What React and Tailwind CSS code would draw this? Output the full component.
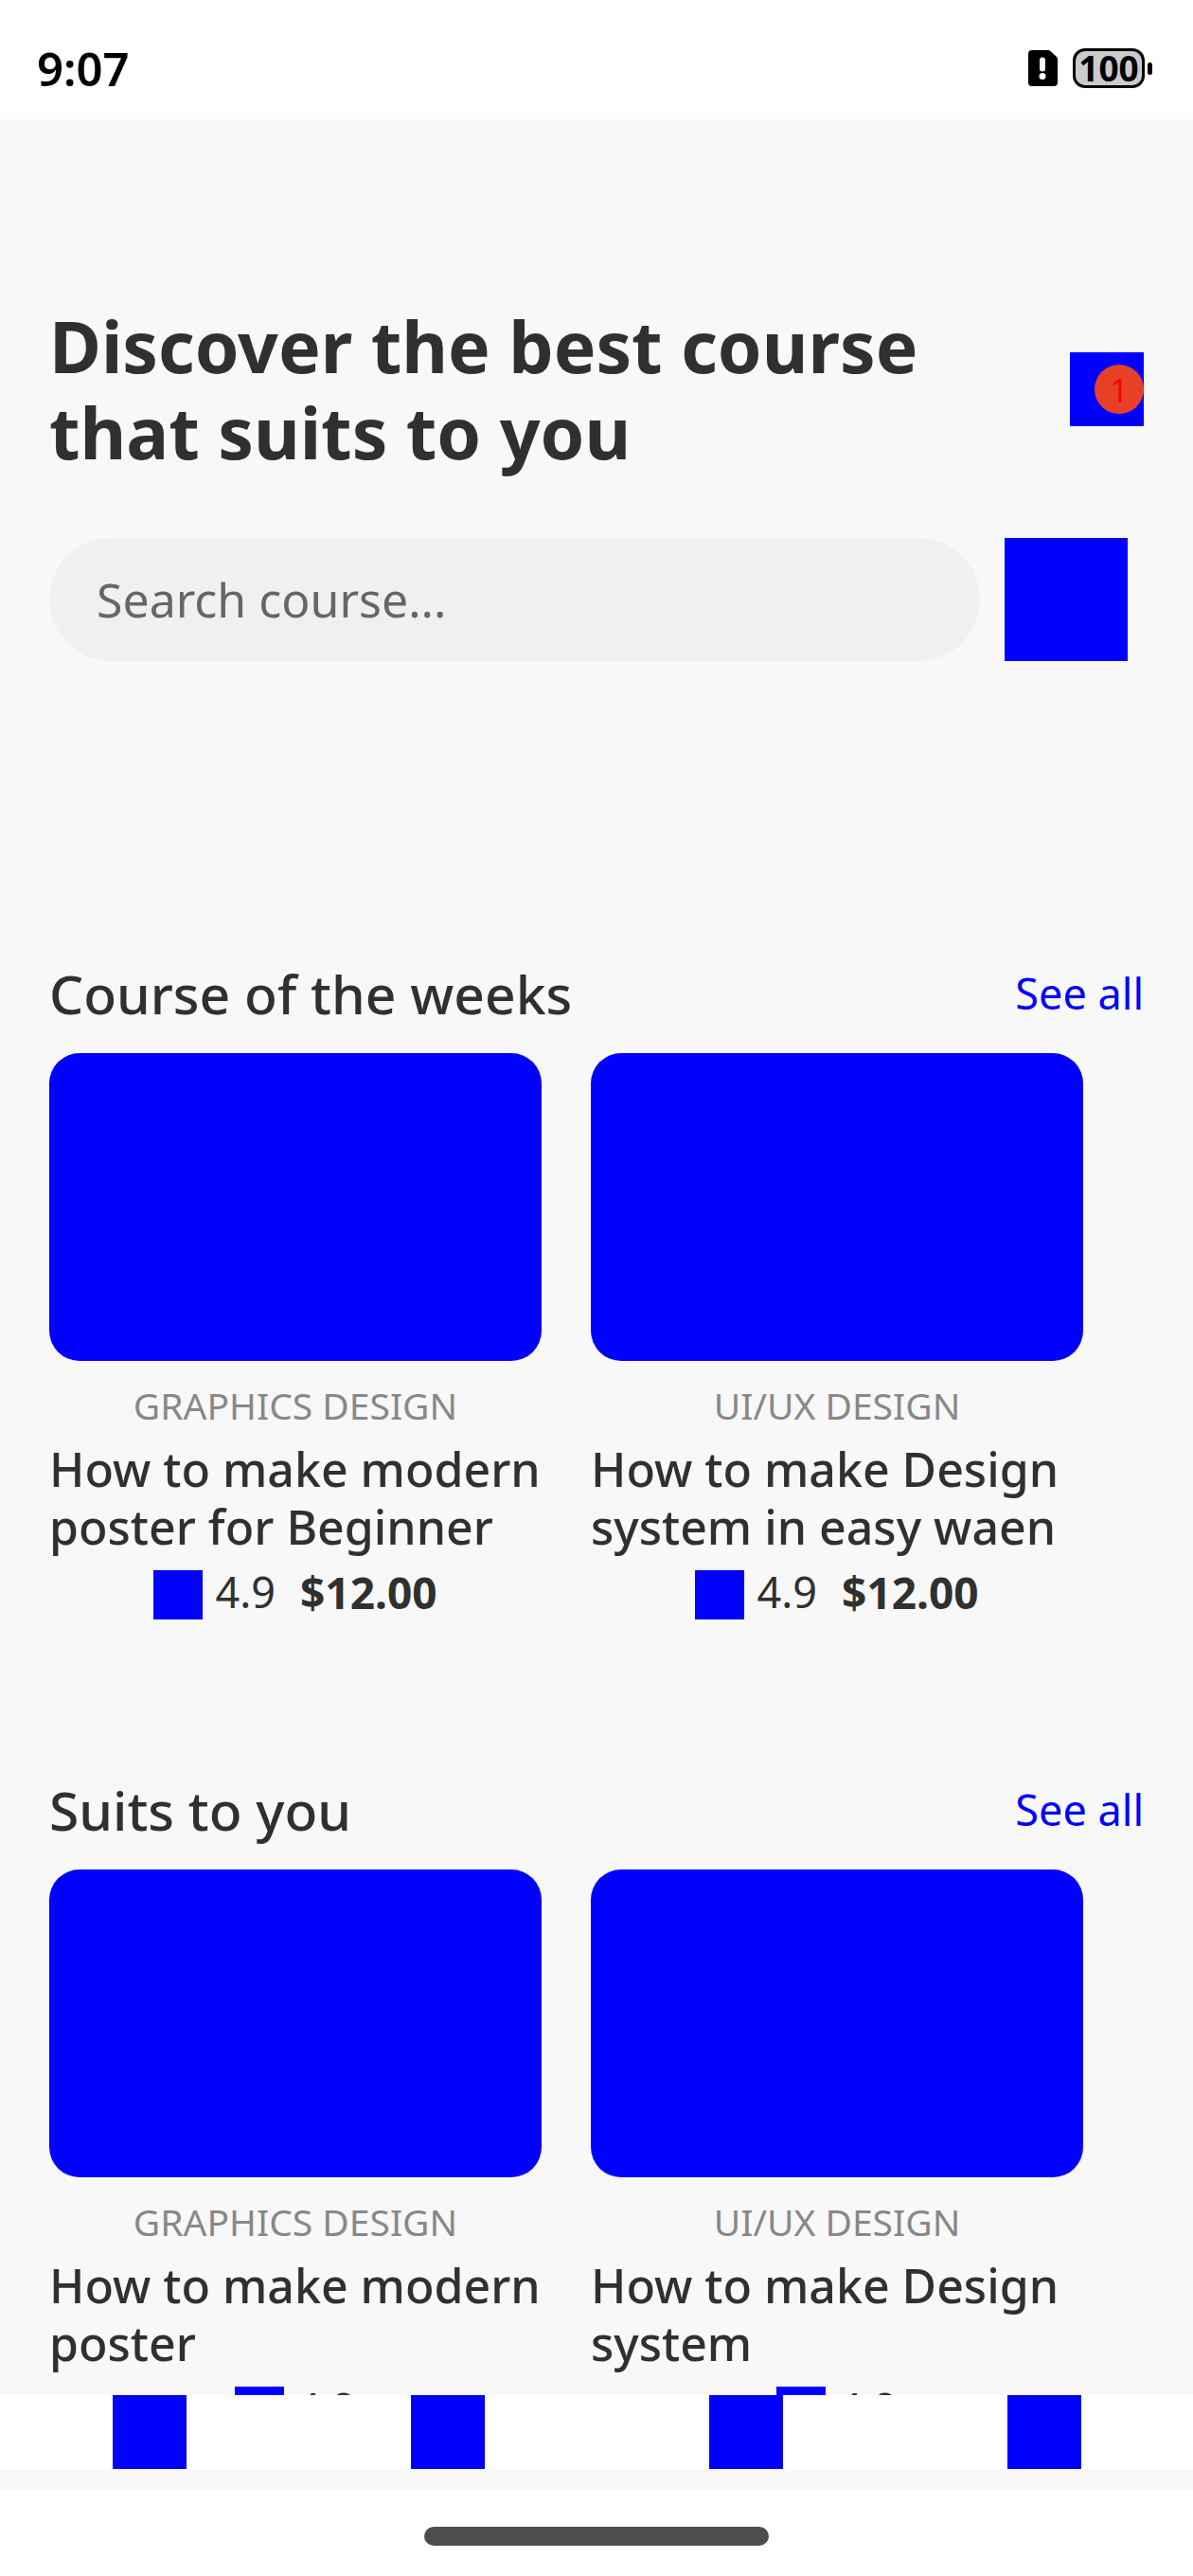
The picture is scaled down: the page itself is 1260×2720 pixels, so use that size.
import React from "react";

const sections = [
  {
    title: "Course of the weeks",
    courses: [
      { category: "GRAPHICS DESIGN", title: ["How to make modern", "poster for Beginner"], rating: "4.9", price: "$12.00" },
      { category: "UI/UX DESIGN", title: ["How to make Design", "system in easy waen"], rating: "4.9", price: "$12.00" },
    ],
  },
  {
    title: "Suits to you",
    courses: [
      { category: "GRAPHICS DESIGN", title: ["How to make modern", "poster"], rating: "4.9" },
      { category: "UI/UX DESIGN", title: ["How to make Design", "system"], rating: "4.9" },
    ],
  },
];

const tabs = ["Home", "Courses", "Saved", "Profile"];

function StatusBar() {
  return (
    <header className="flex h-[126px] shrink-0 items-center justify-between bg-white pt-[18px] pr-[43px] pl-[39px] text-black">
      <time className="text-[49px] leading-[50px] font-semibold">9:07</time>
      <div className="flex items-center gap-4">
        <svg className="h-[38px] w-[31px]" viewBox="0 0 31 38" aria-hidden="true">
          <path d="M4 0H21Q22.500 0 23.500 1L30 7Q31 8 31 9.500V34Q31 38 27 38H4Q0 38 0 34V4Q0 0 4 0Z" fill="#000" />
          <rect x="12" y="7.500" width="6" height="15" rx="3" fill="#fff" />
          <circle cx="15" cy="27.500" r="3.500" fill="#fff" />
        </svg>
        <div className="flex items-center gap-[3px]">
          <div className="flex h-[42px] w-[76px] items-center justify-center rounded-[13px] border-[3px] border-black bg-[#cbcbcb] text-[37px] leading-9 font-bold">
            100
          </div>
          <div className="h-[13px] w-[5px] rounded-full bg-black" />
        </div>
      </div>
    </header>
  );
}

function CourseCard({ course }) {
  return (
    <article className="w-[520px] shrink-0">
      <div className="h-[325px] rounded-[32px] bg-[#0000ff]" />
      <p className="mt-[21px] text-center text-[39px] leading-[52px] text-[#888888]">{course.category}</p>
      <h3 className="mt-[11px] text-[50px] leading-[61px] font-medium whitespace-nowrap">
        {course.title.map((line) => (
          <span key={line} className="block">{line}</span>
        ))}
      </h3>
      <div className="mt-[15px] flex h-[52px] items-start justify-center text-[45px] leading-[46px]">
        <span className="size-[52px] bg-[#0000ff]" />
        <span className="ml-[13px]">{course.rating}</span>
        {course.price && <span className="ml-[26px] text-[46px] font-bold">{course.price}</span>}
      </div>
    </article>
  );
}

function Section({ section }) {
  return (
    <section className="mb-[163px]">
      <div className="flex items-center justify-between pr-[52px]">
        <h2 className="text-[57px] leading-[76px] font-medium">{section.title}</h2>
        <a href="#all" className="text-[45px] leading-[76px] text-[#0000ff]">See all</a>
      </div>
      <div className="mt-[25px] flex gap-[52px]">
        {section.courses.map((course) => (
          <CourseCard key={course.category} course={course} />
        ))}
      </div>
    </section>
  );
}

export default function App() {
  return (
    <div className="flex h-screen flex-col bg-[#f8f8f8] font-['Noto_Sans',sans-serif] text-[#303030]">
      <StatusBar />
      <main className="min-h-0 flex-1 overflow-hidden pt-[194px] pl-[52px]">
        <div className="flex items-center justify-between pr-[52px]">
          <h1 className="text-[75px] leading-[91px] font-bold">
            Discover the best course
            <br />
            that suits to you
          </h1>
          <button aria-label="Notifications" className="relative size-[78px] bg-[#0000ff]">
            <span className="absolute top-[13px] right-0 flex size-[52px] items-center justify-center rounded-full bg-[#e84026] text-[35px] leading-none text-[#ff0000]">
              1
            </span>
          </button>
        </div>
        <form className="mt-[66px] mb-[313px] flex gap-[26px] pr-[69px]">
          <input
            type="search"
            aria-label="Search course"
            placeholder="Search course..."
            className="h-[130px] min-w-0 flex-1 rounded-full bg-[#f0f0f0] px-[50px] text-[50px] placeholder:text-[#666666]"
          />
          <button type="button" aria-label="Filter" className="size-[130px] bg-[#0000ff]" />
        </form>
        {sections.map((section) => (
          <Section key={section.title} section={section} />
        ))}
      </main>
      <nav className="flex h-[78px] shrink-0 justify-around bg-white">
        {tabs.map((tab) => (
          <button key={tab} aria-label={tab} className="size-[78px] bg-[#0000ff]" />
        ))}
      </nav>
      <footer className="mt-[22px] flex h-[91px] shrink-0 items-start justify-center bg-white pt-[39px]">
        <div className="h-5 w-[364px] rounded-full bg-[#4d4d4d]" />
      </footer>
    </div>
  );
}
